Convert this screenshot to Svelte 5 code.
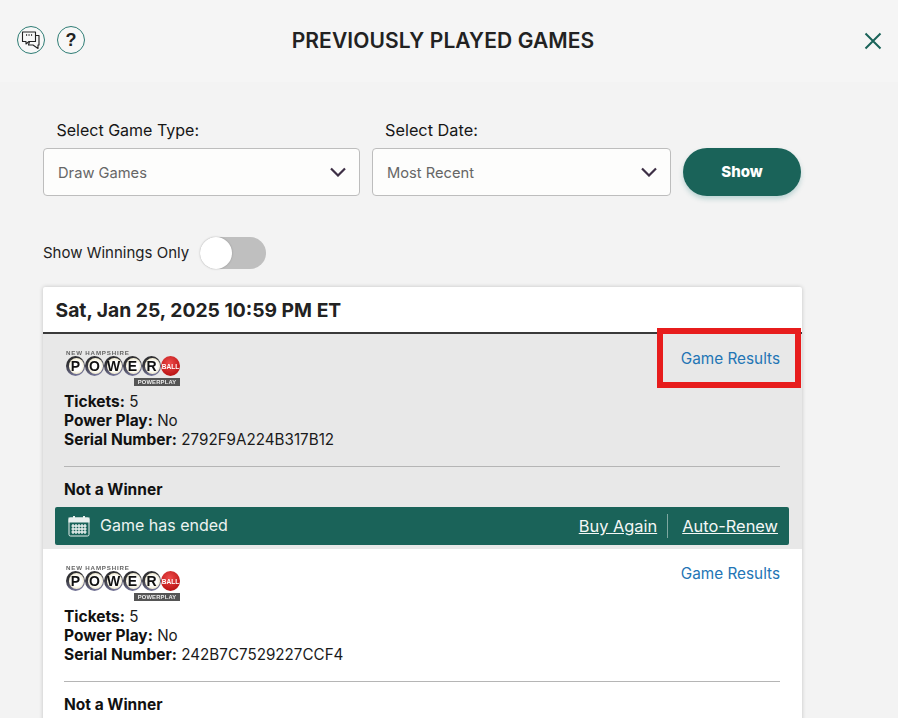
<script>
  const rows = [
    { serial: '2792F9A224B317B12', shaded: true, ended: true },
    { serial: '242B7C7529227CCF4', shaded: false, ended: false }
  ];
  const letters = ['P', 'O', 'W', 'E', 'R'];
</script>

<div class="page">
  <header class="top">
    <div class="tools">
      <button class="round" aria-label="Chat">
        <svg viewBox="0 0 20 20" width="20" height="20" fill="none" stroke="#222" stroke-width="1.1" stroke-linejoin="round">
          <path d="M1.500 2h13v9.500H8L5 14v-2.500H1.500z" />
          <path d="M14.500 5.500h3.500v9.500h-1v3.500L12 15H7.500l1-3.500" />
          <path d="M5 5h1.100M7.500 5h1.100M10 5h1.100" stroke-width="1.300" />
        </svg>
      </button>
      <button class="round help">?</button>
    </div>
    <h1>PREVIOUSLY PLAYED GAMES</h1>
    <button class="close" aria-label="Close">
      <svg viewBox="0 0 18 18" width="18" height="18" fill="none" stroke="#1a6359" stroke-width="2">
        <path d="M1.500 1.500l15 15M16.500 1.500l-15 15" />
      </svg>
    </button>
  </header>

  <main>
    <section class="filters">
      <div class="field first">
        <span class="label">Select Game Type:</span>
        <div class="select">
          <span>Draw Games</span>
          <svg class="chev" viewBox="0 0 16 10" width="16" height="10" fill="none" stroke="#3d2f45" stroke-width="2.200"><path d="M1 1.500l7 7 7-7" /></svg>
        </div>
      </div>
      <div class="field second">
        <span class="label">Select Date:</span>
        <div class="select">
          <span>Most Recent</span>
          <svg class="chev" viewBox="0 0 16 10" width="16" height="10" fill="none" stroke="#3d2f45" stroke-width="2.200"><path d="M1 1.500l7 7 7-7" /></svg>
        </div>
      </div>
      <button class="show">Show</button>
    </section>

    <div class="toggle-row">
      <span class="toggle-text">Show Winnings Only</span>
      <span class="toggle"><span class="knob"></span></span>
    </div>

    <section class="card">
      <div class="card-head">Sat, Jan 25, 2025 10:59 PM ET</div>
      {#each rows as row}
        <article class="row" class:shaded={row.shaded}>
          <div class="row-top">
            <div class="logo">
              <span class="state">NEW HAMPSHIRE</span>
              <div class="balls">
                {#each letters as l}<span class="ball">{l}</span>{/each}
                <span class="ball red">BALL</span>
              </div>
              <span class="pp">POWERPLAY</span>
            </div>
            <a class="results" href="#results">Game Results</a>
          </div>
          <p class="info"><b>Tickets:</b> 5</p>
          <p class="info"><b>Power Play:</b> No</p>
          <p class="info"><b>Serial Number:</b> {row.serial}</p>
          <hr />
          <p class="status"><b>Not a Winner</b></p>
          {#if row.ended}
            <div class="ended">
              <svg viewBox="0 0 22 22" width="22" height="22" fill="none" stroke="#e8f0ee" stroke-width="1">
                <rect x="1" y="3" width="20" height="18" rx="1.500" />
                <rect x="1" y="3" width="20" height="4" fill="#e8f0ee" />
                <path d="M6 1v3.500M16 1v3.500" stroke-width="2" />
                <path d="M5 9v10M8 9v10M11 9v10M14 9v10M17 9v10M3.500 11h15M3.500 14h15M3.500 17h15" stroke-width="1.300" />
              </svg>
              <span class="ended-text">Game has ended</span>
              <a href="#again">Buy Again</a>
              <span class="sep"></span>
              <a href="#renew">Auto-Renew</a>
            </div>
          {/if}
        </article>
      {/each}
      <div class="marker"></div>
    </section>
  </main>
</div>

<style>
  :global(body) {
    margin: 0;
    background: #f3f3f3;
    overflow: hidden;
  }
  .page {
    height: 718px;
    overflow: hidden;
    font-family: Inter, "Noto Sans", sans-serif;
    color: #1a1a1a;
  }
  .top {
    height: 82px;
    background: #f5f5f5;
    position: relative;
    display: flex;
    align-items: center;
    justify-content: center;
  }
  .tools {
    position: absolute;
    left: 17px;
    top: 26px;
    display: flex;
    gap: 12px;
  }
  .round {
    width: 28px;
    height: 28px;
    border-radius: 50%;
    border: 1px solid #2f7d75;
    background: #f7f7f7;
    padding: 0;
    display: flex;
    align-items: center;
    justify-content: center;
  }
  .help {
    font: 700 18px "Liberation Sans", sans-serif;
    color: #222;
  }
  h1 {
    margin: 0 0 1px;
    font-size: 21px;
    font-weight: 600;
    letter-spacing: 0.1px;
    color: #222;
    position: relative;
    left: -6px;
  }
  .close {
    position: absolute;
    left: 864px;
    top: 32px;
    background: none;
    border: 0;
    padding: 0;
    display: flex;
  }
  main {
    padding: 0 43px;
    width: 759px;
  }
  .filters {
    display: flex;
    align-items: flex-end;
    gap: 12px;
    padding-top: 38px;
  }
  .field {
    display: flex;
    flex-direction: column;
  }
  .first { width: 317px; }
  .second { width: 299px; }
  .label {
    font-size: 16px;
    line-height: 20px;
    margin: 0 0 8px 13.500px;
    color: #161616;
  }
  .second .label {
    font-size: 16.300px;
    margin-left: 13px;
  }
  .select {
    height: 46px;
    box-sizing: content-box;
    border: 1px solid #bdbdbd;
    border-radius: 4px;
    background: #fdfdfc;
    display: flex;
    align-items: center;
    justify-content: space-between;
    padding: 0 13px 0 14px;
    font-size: 14.700px;
    color: #666;
  }
  .select span {
    padding-top: 2px;
  }
  .show {
    width: 118px;
    height: 48px;
    border: 0;
    border-radius: 24px;
    background: #1a6359;
    color: #fff;
    font: 800 15px Inter, sans-serif;
    box-shadow: 0 3px 5px rgba(60, 140, 140, 0.3);
    margin-bottom: 0;
    padding: 0 0 2px;
  }
  .toggle-row {
    margin-top: 41px;
    display: flex;
    align-items: center;
    gap: 10.500px;
    font-size: 15px;
    height: 32px;
    color: #222;
  }
  .toggle-text {
    padding-bottom: 2px;
  }
  .toggle {
    width: 66px;
    height: 32px;
    border-radius: 16px;
    background: #bfbfbf;
    position: relative;
  }
  .knob {
    position: absolute;
    left: 0;
    top: 0;
    width: 32px;
    height: 32px;
    border-radius: 50%;
    background: #fff;
    box-shadow: 0 0 2px rgba(0, 0, 0, 0.25);
  }
  .card {
    margin-top: 18px;
    background: #fff;
    position: relative;
    box-shadow: 0 0 4px rgba(0, 0, 0, 0.2);
    border-radius: 2px 2px 0 0;
  }
  .card-head {
    height: 47px;
    box-sizing: border-box;
    border-bottom: 2px solid #3a3a3a;
    padding: 12px 0 0 12.500px;
    font-size: 19.300px;
    font-weight: 700;
    line-height: 22px;
    color: #222;
  }
  .row {
    padding: 14px 13px 4px 12px;
    height: 197px;
  }
  .row.shaded {
    background: #e8e8e8;
  }
  .row-top {
    display: flex;
    justify-content: space-between;
    align-items: flex-start;
    padding: 0 9px;
    height: 44px;
  }
  .logo {
    width: 116px;
    height: 36px;
    position: relative;
    margin-top: 1px;
    filter: blur(0.3px);
  }
  .state {
    position: absolute;
    left: 2px;
    top: 0;
    font: 700 6.200px "Liberation Sans", sans-serif;
    letter-spacing: 0.8px;
    color: #666;
    white-space: nowrap;
  }
  .balls {
    position: absolute;
    left: 2px;
    top: 7px;
    display: flex;
    gap: 0;
  }
  .ball {
    width: 19px;
    height: 20px;
    border-radius: 50%;
    background:
      linear-gradient(160deg, rgba(20, 20, 25, 0.65) 0 30%, rgba(130, 130, 200, 0.5) 85%),
      #666;
    display: flex;
    align-items: center;
    justify-content: center;
    font: 900 14px "Liberation Sans", sans-serif;
    color: #111;
    position: relative;
    z-index: 0;
  }
  .ball::before {
    content: "";
    position: absolute;
    inset: 2px 1.500px 2.500px 2.500px;
    border-radius: 50%;
    background: radial-gradient(circle at 50% 50%, #fff 0 45%, #e8dfb8 85%);
    z-index: -1;
  }
  .ball.red {
    background: radial-gradient(circle at 45% 35%, #ee4b4b, #bb1414 75%);
    color: #fff;
    font-size: 6.500px;
  }
  .ball.red::before {
    display: none;
  }
  .pp {
    position: absolute;
    right: 0;
    bottom: -1px;
    width: 46px;
    box-sizing: border-box;
    text-align: center;
    background: #555;
    color: #eee;
    font: 700 5.800px/8px "Liberation Sans", sans-serif;
    letter-spacing: 0.2px;
  }
  .results {
    font-size: 15.300px;
    line-height: 20px;
    color: #2375b5;
    text-decoration: none;
    position: relative;
    top: 1px;
  }
  .info {
    margin: 0 0 0 9px;
    font-size: 15.200px;
    line-height: 19px;
    color: #1a1a1a;
  }
  .info b, .status b {
    font-weight: 700;
    font-size: 15.500px;
    color: #111;
  }
  hr {
    border: 0;
    border-top: 1px solid #b5b5b5;
    margin: 17px 9px 0;
  }
  .status {
    margin: 13px 0 0 9px;
    font-size: 14.500px;
    line-height: 19px;
  }
  .ended {
    margin-top: 8px;
    height: 38px;
    background: #1a6359;
    border-radius: 2px;
    display: flex;
    align-items: center;
    color: #edf3f1;
    padding: 0 11px 0 13px;
    font-size: 16px;
  }
  .ended-text {
    margin-left: 10px;
    margin-right: auto;
    padding-bottom: 3px;
  }
  .ended a {
    color: #f4f7f6;
    text-decoration: underline;
    font-size: 16.400px;
  }
  .sep {
    width: 1px;
    height: 24px;
    background: #7fa8a1;
    margin: 0 14px 0 10px;
  }
  .marker {
    position: absolute;
    left: 614px;
    top: 41px;
    width: 132px;
    height: 48px;
    border: 6px solid #e71c1c;
    pointer-events: none;
  }
</style>
